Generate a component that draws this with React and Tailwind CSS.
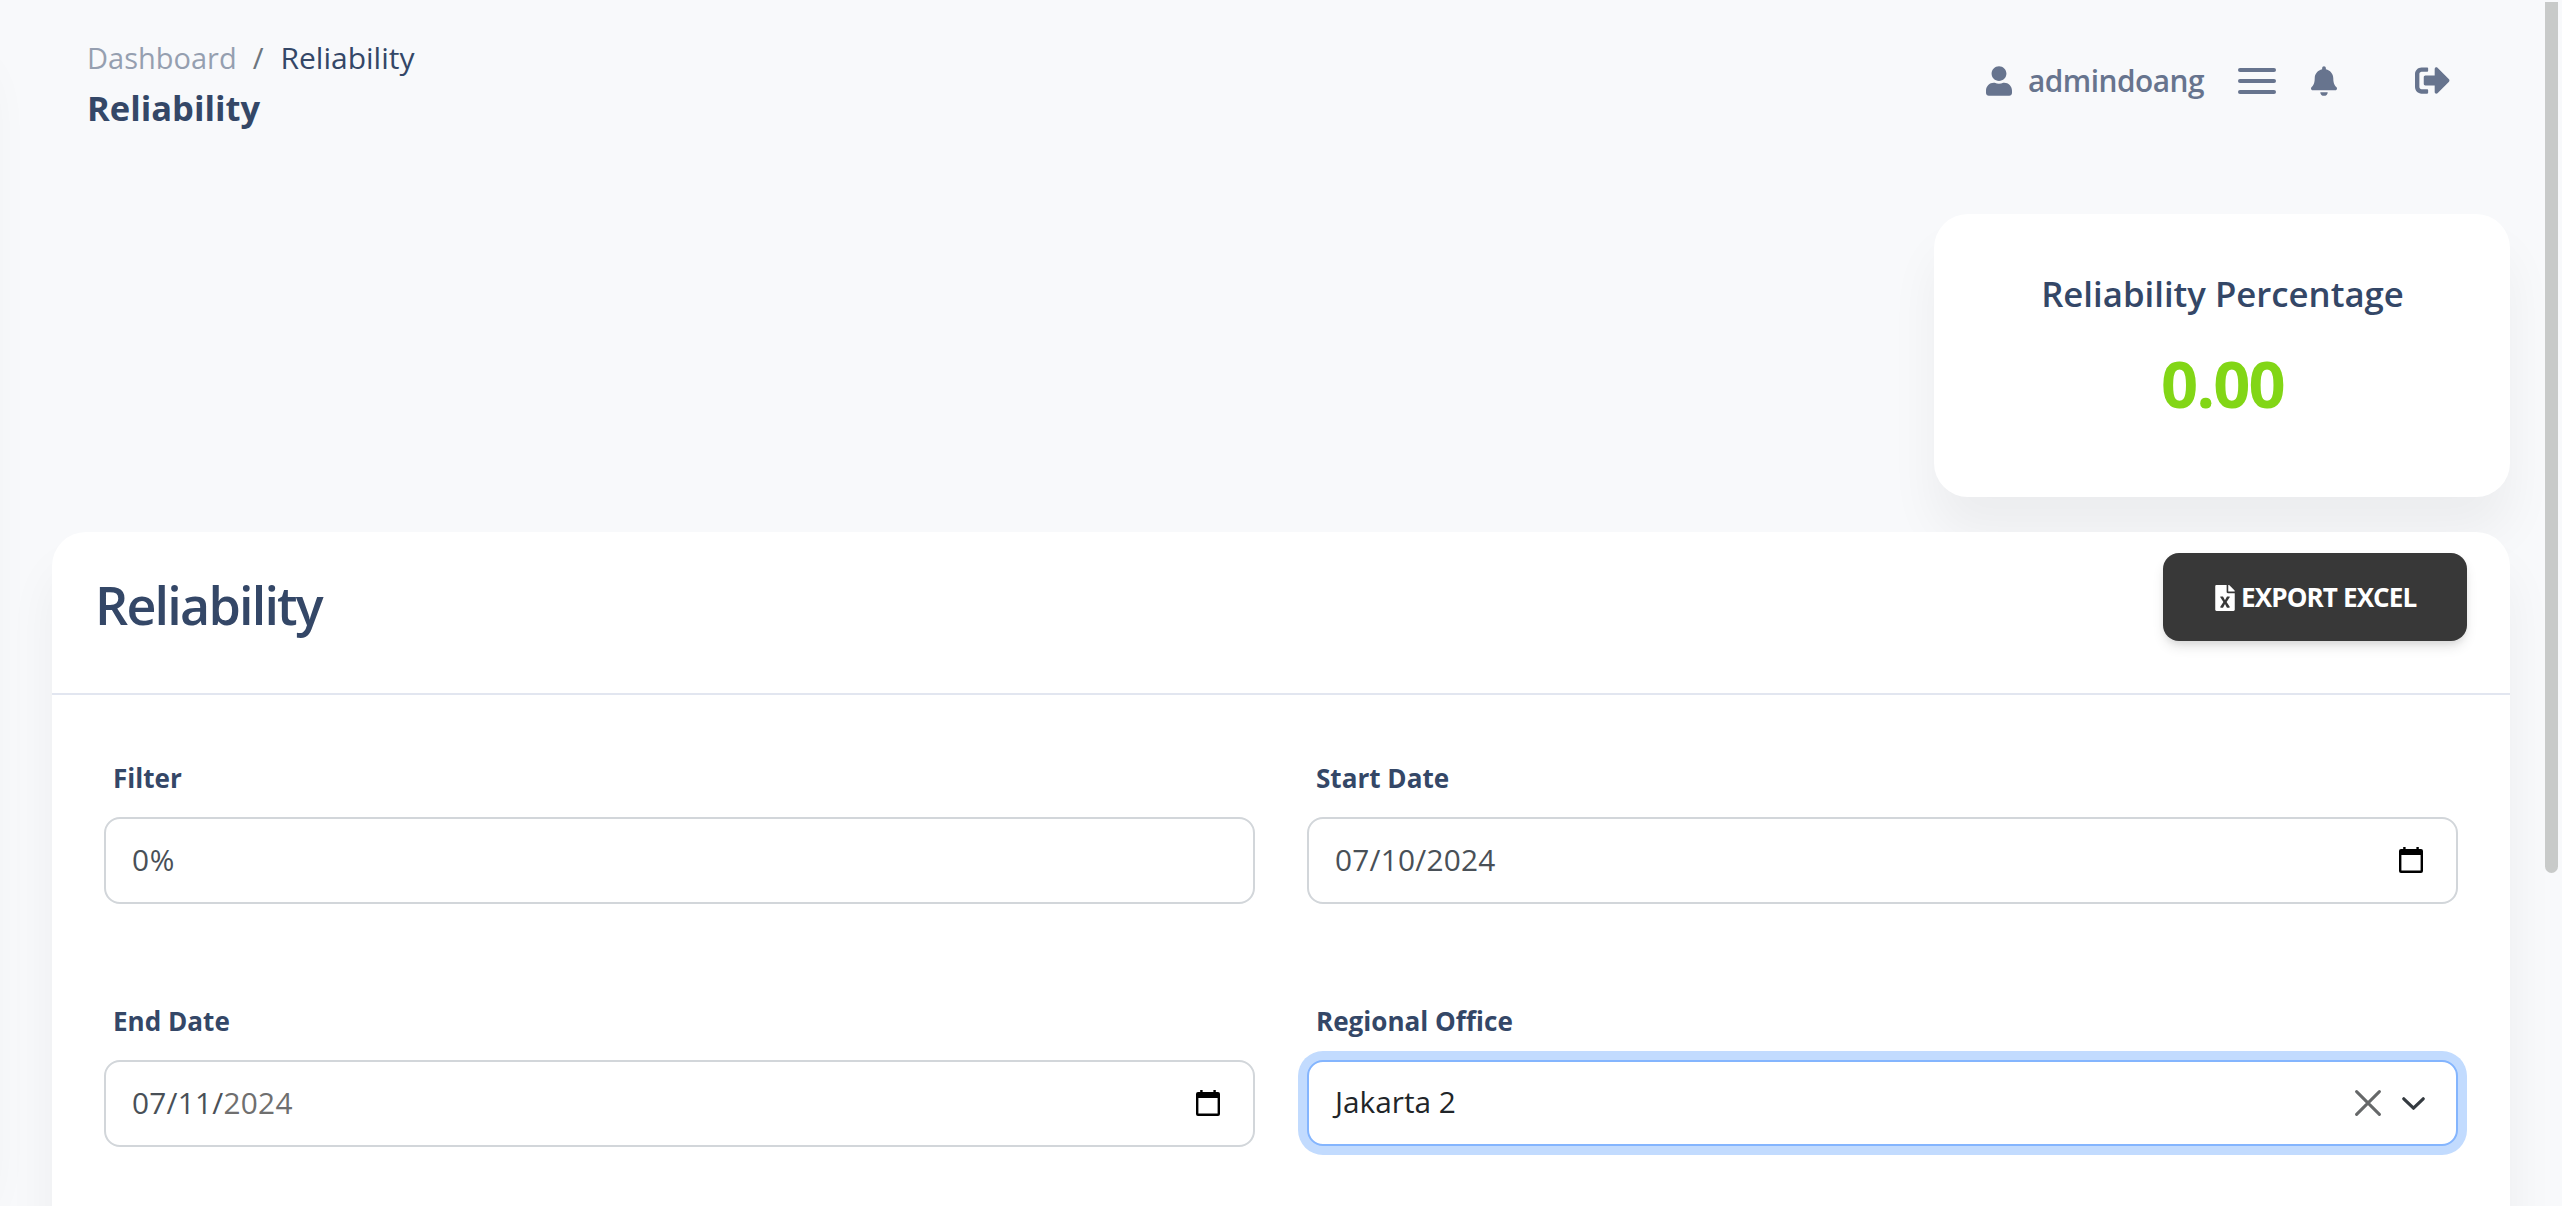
import React from "react";
import { FaUser, FaBell, FaSignOutAlt, FaFileExcel } from "react-icons/fa";

function CalendarIcon() {
  return (
    <svg className="h-[26px] w-6 shrink-0" viewBox="0 0 24 26" fill="black">
      <path
        fillRule="evenodd"
        d="M4.2 0h2.4v2h10.8V0h2.4v2H22a2 2 0 0 1 2 2v20a2 2 0 0 1-2 2H2a2 2 0 0 1-2-2V4a2 2 0 0 1 2-2h2.2zM2.4 8v15.6h19.2V8z"
      />
    </svg>
  );
}

function Field({ label, children }) {
  return (
    <div className="flex flex-col gap-[19px]">
      <label className="pl-[9px] text-[26.08px] leading-10 font-bold text-[#344767]">{label}</label>
      {children}
    </div>
  );
}

function InputBox({ children }) {
  return (
    <div className="flex h-[87px] items-center justify-between rounded-2xl border-2 border-[#d2d6da] bg-white pr-[33px] pb-px pl-[26px] text-[29.8px] leading-10 text-[#495057]">
      {children}
    </div>
  );
}

function Header() {
  return (
    <header className="flex h-[161px] justify-between pr-[112px] pl-[87px]">
      <div className="pt-[34px] text-[#344767]">
        <nav className="flex h-12 items-center leading-[48px]">
          <span className="text-[29px] opacity-50">Dashboard</span>
          <span className="ml-4 text-[29.5px] text-[#6c757d]">/</span>
          <span className="ml-[17px] text-[30px]">Reliability</span>
        </nav>
        <h6 className="text-[34.5px] leading-[51px] font-bold">Reliability</h6>
      </div>
      <div className="flex items-center text-[#67748e]">
        <FaUser className="h-[30px] w-[26px]" />
        <span className="ml-4 text-[29.8px] leading-[48px] font-semibold tracking-[-0.5px]">admindoang</span>
        <div className="ml-[34px] flex w-[38px] flex-col gap-[7px]">
          <i className="h-1 rounded-sm bg-[#67748e]" />
          <i className="h-1 rounded-sm bg-[#67748e]" />
          <i className="h-1 rounded-sm bg-[#67748e]" />
        </div>
        <FaBell className="ml-[35px] h-[30px] w-[26px]" />
        <FaSignOutAlt className="ml-[78px] h-[35px] w-[35px]" />
      </div>
    </header>
  );
}

export default function App() {
  return (
    <div className="relative h-screen overflow-hidden bg-[#f8f9fb] font-['Open_Sans',sans-serif]">
      <aside className="absolute top-[30px] -left-[415px] h-[1146px] w-[400px] rounded-[30px] shadow-[0_37px_50px_rgba(0,0,0,0.05)]" />
      <Header />

      <main className="pr-[52px] pl-[52px]">
        <section className="mt-[53px] ml-auto flex h-[283px] w-[576px] flex-col items-center rounded-[34px] bg-white pt-14 shadow-[0_37px_50px_rgba(0,0,0,0.05)]">
          <h5 className="pl-px text-[34.75px] leading-[48px] font-semibold text-[#344767]">Reliability Percentage</h5>
          <p className="mt-[25px] pl-px text-[65px] leading-[80px] font-bold tracking-[-1.77px] text-[#82d616]">0.00</p>
        </section>

        <section className="relative mt-[35px] h-[900px] rounded-[34px] bg-white shadow-[0_37px_50px_rgba(0,0,0,0.05)]">
          <div className="flex h-[163px] items-start justify-between border-b-2 border-[#e2e6f0] pr-[43px] pl-[43px]">
            <h2 className="mt-[43px] text-[52px] leading-[60px] font-semibold tracking-[-1.79px] text-[#344767]">
              Reliability
            </h2>
            <button className="mt-[21px] flex h-[88px] w-[304px] items-center rounded-2xl bg-[#383838] pl-[52px] text-[26.08px] font-bold tracking-[-0.9px] text-white shadow-[0_7px_13px_-2px_rgba(0,0,0,0.12),0_4px_7px_-2px_rgba(0,0,0,0.07)]">
              <FaFileExcel className="mt-0.5 h-[26px] w-5" />
              <span className="ml-1.5 leading-10 whitespace-nowrap">EXPORT EXCEL</span>
            </button>
          </div>

          <form className="grid grid-cols-2 gap-x-[52px] gap-y-[97px] px-[52px] pt-[63px]">
            <Field label="Filter">
              <InputBox>
                <span className="tracking-[0.6px]">0%</span>
              </InputBox>
            </Field>
            <Field label="Start Date">
              <InputBox>
                <span className="tracking-[0.25px]">07/10/2024</span>
                <CalendarIcon />
              </InputBox>
            </Field>
            <Field label="End Date">
              <InputBox>
                <span className="tracking-[0.25px]">
                  07/11/<span className="text-[#6f6f6f]">2024</span>
                </span>
                <CalendarIcon />
              </InputBox>
            </Field>
            <Field label="Regional Office">
              <div className="flex h-[86px] items-center rounded-2xl border-2 border-[#84b5fe] bg-white pr-[31px] pl-[26px] text-[#212529] shadow-[0_0_0_9px_#c2dbfe]">
                <span className="flex-1 pb-[3px] text-[29.8px] leading-10">Jakarta 2</span>
                <svg className="size-[26px]" viewBox="0 0 26 26" fill="none" stroke="#666869" strokeWidth="3" strokeLinecap="round">
                  <path d="M1.6 1.6l22.8 22.8M24.4 1.6L1.6 24.4" />
                </svg>
                <svg className="ml-[21px] h-[13px] w-[23px]" viewBox="0 0 23 13" fill="none" stroke="#343a40" strokeWidth="3.2" strokeLinecap="round" strokeLinejoin="round">
                  <path d="M1.8 1.8l9.7 9.4 9.7-9.4" />
                </svg>
              </div>
            </Field>
          </form>
        </section>
      </main>

      <div className="absolute top-[2px] left-[2545px] h-[871px] w-[13px] rounded-tl-[2px] rounded-tr-[13px] rounded-b-full bg-[#c8cac9]" />
    </div>
  );
}
